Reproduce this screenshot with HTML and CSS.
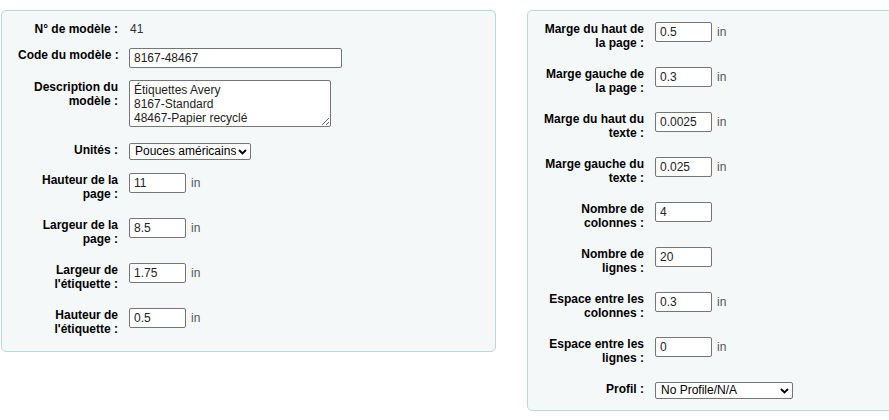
FILE: index.html
```html
<!DOCTYPE html>
<html lang="fr">
<head>
  <meta charset="UTF-8" />
  <meta name="viewport" content="width=device-width, initial-scale=1" />
  <title>Modifier le modèle d'étiquettes</title>
  <link rel="stylesheet" href="styles.css">
</head>
<body>
  <div class="page">
    <fieldset class="rows left">
      <div class="row row-text">
        <span class="label">N° de modèle :</span>
        <span class="value">41</span>
      </div>
      <div class="row">
        <label for="template_code">Code du modèle :</label>
        <input type="text" id="template_code" class="wide" value="8167-48467" />
      </div>
      <div class="row">
        <label for="template_desc">Description du<br>modèle :</label>
        <textarea id="template_desc">Étiquettes Avery
8167-Standard
48467-Papier recyclé</textarea>
      </div>
      <div class="row row-tight">
        <label for="units">Unités :</label>
        <span class="select-wrap">
          <select id="units" class="units">
            <option>Pouces américains</option>
            <option>Points PostScript</option>
            <option>Millimètres</option>
            <option>Centimètres</option>
          </select>
          <svg class="chevron" width="9" height="6" viewBox="0 0 9 6"><path d="M1 1 L4.5 4.5 L8 1" /></svg>
        </span>
      </div>
      <div class="row">
        <label for="page_height">Hauteur de la<br>page :</label>
        <input type="text" id="page_height" class="short" value="11" />
        <span class="unit">in</span>
      </div>
      <div class="row">
        <label for="page_width">Largeur de la<br>page :</label>
        <input type="text" id="page_width" class="short" value="8.5" />
        <span class="unit">in</span>
      </div>
      <div class="row">
        <label for="label_width">Largeur de<br>l'étiquette :</label>
        <input type="text" id="label_width" class="short" value="1.75" />
        <span class="unit">in</span>
      </div>
      <div class="row">
        <label for="label_height">Hauteur de<br>l'étiquette :</label>
        <input type="text" id="label_height" class="short" value="0.5" />
        <span class="unit">in</span>
      </div>
    </fieldset>

    <fieldset class="rows right">
      <div class="row">
        <label for="top_margin">Marge du haut de<br>la page :</label>
        <input type="text" id="top_margin" class="short" value="0.5" />
        <span class="unit">in</span>
      </div>
      <div class="row">
        <label for="left_margin">Marge gauche de<br>la page :</label>
        <input type="text" id="left_margin" class="short" value="0.3" />
        <span class="unit">in</span>
      </div>
      <div class="row">
        <label for="top_text_margin">Marge du haut du<br>texte :</label>
        <input type="text" id="top_text_margin" class="short" value="0.0025" />
        <span class="unit">in</span>
      </div>
      <div class="row">
        <label for="left_text_margin">Marge gauche du<br>texte :</label>
        <input type="text" id="left_text_margin" class="short" value="0.025" />
        <span class="unit">in</span>
      </div>
      <div class="row">
        <label for="cols">Nombre de<br>colonnes :</label>
        <input type="text" id="cols" class="short" value="4" />
      </div>
      <div class="row">
        <label for="rows">Nombre de<br>lignes :</label>
        <input type="text" id="rows" class="short" value="20" />
      </div>
      <div class="row">
        <label for="col_gap">Espace entre les<br>colonnes :</label>
        <input type="text" id="col_gap" class="short" value="0.3" />
        <span class="unit">in</span>
      </div>
      <div class="row">
        <label for="row_gap">Espace entre les<br>lignes :</label>
        <input type="text" id="row_gap" class="short" value="0" />
        <span class="unit">in</span>
      </div>
      <div class="row">
        <label for="profile">Profil :</label>
        <span class="select-wrap">
          <select id="profile" class="profile">
            <option>No Profile/N/A</option>
          </select>
          <svg class="chevron" width="9" height="6" viewBox="0 0 9 6"><path d="M1 1 L4.5 4.5 L8 1" /></svg>
        </span>
      </div>
    </fieldset>
  </div>
</body>
</html>
```

FILE: styles.css
```css
:root {
  --panel: #f4f8f9;
  --panel-border: #b9d8d9;
  --field-border: #767676;
  --hint: #555;
}
body {
  margin: 0;
  font-family: "Liberation Sans", Arial, sans-serif;
  font-size: 12px;
  color: #000;
  background: #fff;
  overflow: hidden;
}
.page {
  display: flex;
  align-items: flex-start;
  gap: 31px;
  padding: 10px 0 0 1px;
}
.rows {
  margin: 0;
  min-width: 0;
  background: var(--panel);
  border: 1px solid var(--panel-border);
  border-radius: 5px;
  padding: 5px 0 3px;
  box-sizing: border-box;
  flex-shrink: 0;
}
.left {
  width: 495px;
  padding-bottom: 4px;
}
.right {
  width: 420px;
}
.row {
  display: flex;
  align-items: flex-start;
  padding: 6px 0;
}
.row label, .row .label {
  flex-shrink: 0;
  width: 100px;
  margin: 0 11px 0 16px;
  padding-bottom: 5px;
  text-align: right;
  font-weight: bold;
  line-height: 14px;
  white-space: nowrap;
}
.row-text .label {
  padding-bottom: 0;
}
.row-tight label {
  padding-bottom: 4px;
}
.value {
  line-height: 14px;
  color: #333;
  padding-left: 1px;
}
input[type="text"], textarea, select {
  box-sizing: border-box;
  margin: 0;
  border: 1px solid var(--field-border);
  border-radius: 2px;
  background: #fff;
  font-family: inherit;
  font-size: 12px;
  color: #222;
}
input[type="text"] {
  height: 20px;
  padding: 0 4px;
}
input.wide {
  width: 213px;
}
input.short {
  width: 57px;
}
textarea {
  width: 202px;
  height: 47px;
  padding: 2px 4px;
  line-height: 14px;
  margin-bottom: 4px;
  overflow: hidden;
}
.unit {
  margin-left: 5px;
  line-height: 20px;
  color: var(--hint);
}
.select-wrap {
  position: relative;
  display: inline-block;
}
select {
  appearance: none;
  height: 17px;
  padding: 0 14px 0 5px;
  line-height: 15px;
  color: #000;
}
select.units {
  width: 122px;
}
select.profile {
  width: 138px;
}
.chevron {
  position: absolute;
  right: 4px;
  top: 6px;
  pointer-events: none;
}
.chevron path {
  fill: none;
  stroke: #000;
  stroke-width: 1.8;
}
```
